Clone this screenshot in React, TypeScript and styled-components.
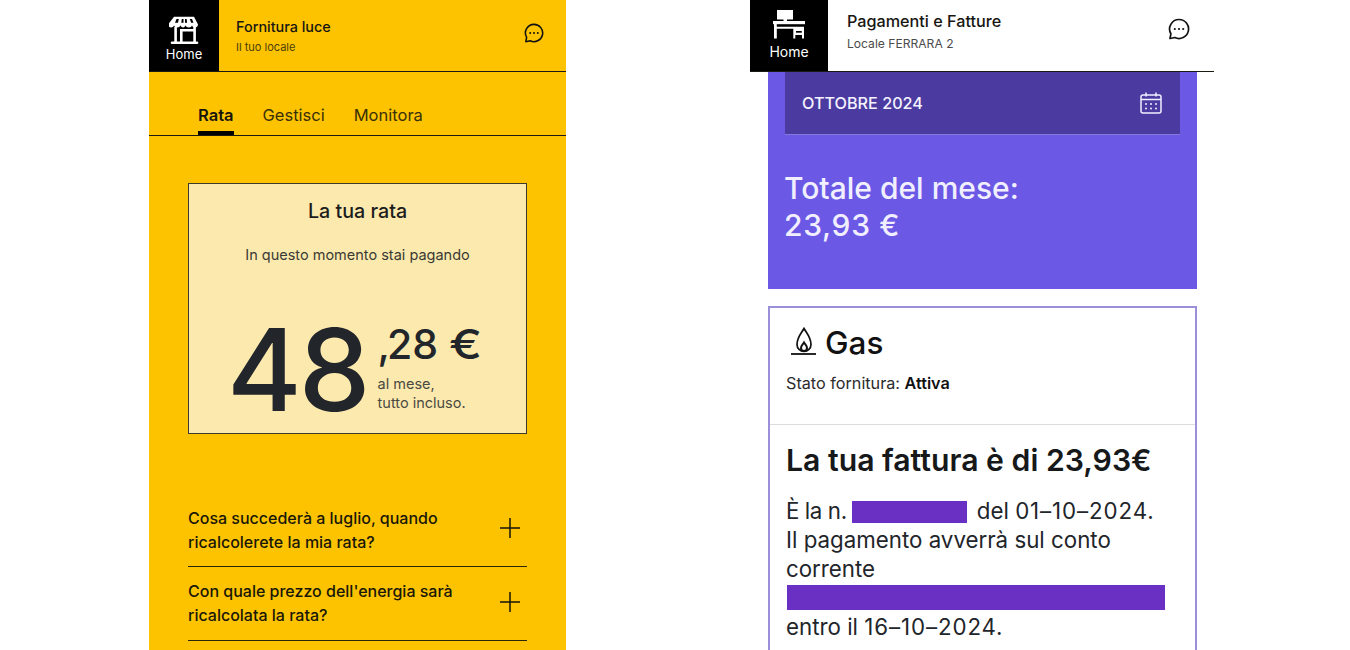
import React from "react";
import styled, { createGlobalStyle } from "styled-components";

const Global = createGlobalStyle`
  html, body { margin: 0; padding: 0; background: #fff; }
  body { font-family: "Inter", "Liberation Sans", sans-serif; color: #1f2226; overflow: hidden; }
  * { box-sizing: border-box; }
`;

const Page = styled.div`
  width: 1350px;
  height: 650px;
  overflow: hidden;
  display: flex;
  align-items: flex-start;
  padding-left: 149px;
  gap: 184px;
  background: #fff;
`;

const LeftPhone = styled.section`
  width: 417px;
  height: 650px;
  background: #fdc300;
  flex: none;
`;

const RightPhone = styled.section`
  width: 464px;
  height: 650px;
  flex: none;
`;

const Header = styled.header`
  height: 72px;
  display: flex;
  align-items: stretch;
  border-bottom: 1px solid #1c1a10;
`;

const HomeTile = styled.div<{ $w: number; $size: number; $pb: number; $gap: number }>`
  width: ${(p) => p.$w}px;
  flex: none;
  background: #000;
  color: #fff;
  font-size: ${(p) => p.$size}px;
  line-height: 16px;
  display: flex;
  flex-direction: column;
  align-items: center;
  justify-content: flex-end;
  padding-bottom: ${(p) => p.$pb}px;
  gap: ${(p) => p.$gap}px;
`;

const HeadText = styled.div<{ $pl: number; $gap: number; $top: number }>`
  flex: 1;
  padding: ${(p) => p.$top}px 0 0 ${(p) => p.$pl}px;
  display: flex;
  flex-direction: column;
  gap: ${(p) => p.$gap}px;
`;

const HeadTitle = styled.div<{ $size: number }>`
  font-size: ${(p) => p.$size}px;
  line-height: 20px;
  font-weight: 500;
  color: #181612;
`;

const HeadSub = styled.div<{ $size: number; $color: string }>`
  font-size: ${(p) => p.$size}px;
  line-height: 16px;
  color: ${(p) => p.$color};
`;

const ChatSlot = styled.div<{ $right: number; $top: number }>`
  flex: none;
  padding: ${(p) => p.$top}px ${(p) => p.$right}px 0 0;
`;

const Tabs = styled.nav`
  height: 64px;
  display: flex;
  align-items: flex-end;
  gap: 29px;
  padding-left: 49px;
  border-bottom: 1px solid #1c1a10;
`;

const Tab = styled.div<{ $active?: boolean }>`
  font-size: 16.5px;
  line-height: 20px;
  height: 32px;
  padding-top: 2px;
  font-weight: ${(p) => (p.$active ? 600 : 400)};
  color: ${(p) => (p.$active ? "#16140c" : "#3a3008")};
  border-bottom: ${(p) => (p.$active ? "4px solid #000" : "0")};
`;

const RataCard = styled.div`
  margin: 47px 39px 0;
  height: 251px;
  background: #fce9ae;
  border: 1px solid #3b3a2c;
  display: flex;
  flex-direction: column;
  align-items: center;
  padding-top: 15px;
`;

const RataTitle = styled.div`
  font-size: 19.7px;
  line-height: 24px;
  font-weight: 500;
  color: #1b1c1c;
`;

const RataLead = styled.div`
  font-size: 14.5px;
  line-height: 20px;
  margin-top: 22px;
  color: #3a3a34;
`;

const Amount = styled.div`
  display: flex;
  align-self: flex-start;
  margin: 48px 0 0 38px;
`;

const BigNumber = styled.div`
  font-size: 114px;
  line-height: 114px;
  font-weight: 500;
  letter-spacing: -3px;
  color: #22262b;
`;

const AmountSide = styled.div`
  display: flex;
  flex-direction: column;
  margin-left: 10px;
`;

const Cents = styled.div`
  font-size: 41px;
  line-height: 48px;
  margin-top: 7px;
  font-weight: 500;
  white-space: nowrap;
  color: #22262b;
`;

const Comma = styled.span`
  letter-spacing: -3px;
`;

const Euro = styled.span`
  display: inline-block;
  transform: scaleX(1.2);
  transform-origin: left center;
`;

const Period = styled.div`
  font-size: 14.5px;
  line-height: 19px;
  margin-top: 6px;
  color: #4b4a42;
`;

const Faq = styled.div`
  margin: 61px 39px 0;
  display: flex;
  flex-direction: column;
`;

const FaqRow = styled.div<{ $h: number; $pt: number }>`
  height: ${(p) => p.$h}px;
  padding-top: ${(p) => p.$pt}px;
  display: flex;
  justify-content: space-between;
  border-bottom: 1px solid #2c2608;
`;

const FaqText = styled.div`
  font-size: 16px;
  line-height: 23.5px;
  font-weight: 500;
  color: #191708;
`;

const PlusSlot = styled.div<{ $pt: number }>`
  padding: ${(p) => p.$pt}px 7px 0 0;
`;

const PurplePanel = styled.div`
  margin: 0 17px 0 18px;
  width: 429px;
  height: 217px;
  background: #6b59e6;
  padding: 0 17px;
`;

const MonthBar = styled.div`
  height: 63px;
  background: #4b3ba0;
  border-bottom: 1px solid #8478dc;
  display: flex;
  align-items: center;
  justify-content: space-between;
  padding: 0 18px 0 17px;
  color: #f4f2ff;
  font-size: 16.2px;
  font-weight: 500;
`;

const MonthTotal = styled.div`
  margin: 35px 0 0 -1px;
  font-size: 30px;
  line-height: 37px;
  font-weight: 500;
  color: #f1efff;
`;

const TotalValue = styled.span`
  letter-spacing: 0.7px;
`;

const GasCard = styled.div`
  margin: 17px 17px 0 18px;
  width: 429px;
  height: 360px;
  border: 2px solid #9a90da;
  border-bottom: 0;
  background: #fff;
`;

const GasTop = styled.div`
  height: 117px;
  padding: 15px 0 0 16px;
  border-bottom: 1px solid #dddddd;
`;

const GasTitle = styled.div`
  display: flex;
  align-items: center;
  gap: 9px;
  padding-left: 2px;
  font-size: 31.5px;
  line-height: 40px;
  font-weight: 500;
  color: #111;
`;

const Stato = styled.div`
  margin-top: 10px;
  font-size: 16.2px;
  line-height: 20px;
  color: #2b2b2b;
  b { font-weight: 600; color: #111; }
`;

const GasBody = styled.div`
  padding: 15px 16px 0;
`;

const Invoice = styled.div`
  font-size: 30.2px;
  line-height: 40px;
  font-weight: 600;
  white-space: nowrap;
  color: #16181a;
`;

const Para = styled.div`
  margin-top: 16px;
  font-size: 22.3px;
  line-height: 29px;
  color: #22252a;
  white-space: nowrap;
`;

const DateText = styled.span`
  letter-spacing: 0.9px;
`;

const InvoiceLead = styled.span`
  letter-spacing: -0.4px;
`;

const Redact = styled.span`
  display: inline-block;
  width: 115px;
  height: 22px;
  margin: 0 4px 0 -1px;
  background: #6a30c4;
  vertical-align: -4px;
`;

const RedactBar = styled.div`
  width: 378px;
  height: 25px;
  margin: 2px 0 2px 1px;
  background: #6a30c4;
`;

const Store = () => (
  <svg width="30" height="28" viewBox="0 0 30 28" fill="none">
    <path fill="#fff" d="M5 .7h20l4 7.800c0 2-1.500 3-3 3s-2.600-.9-3-2c-.4 1.100-1.600 2-3.200 2s-2.600-.9-3.300-2c-.5 1.100-1.500 2-2.500 2s-2-.9-2.500-2c-.7 1.100-1.700 2-3.300 2s-2.800-.9-3.200-2c-.4 1.100-1.500 2-3 2s-3-1-3-3z" />
    <path fill="#000" d="M7.500 3h2.300l-.8 3.700H6zM12.800 3h1.700v3.700h-2.200zM16 3h1.600l.5 3.700H16zM20.700 3H23l1.500 3.700h-2.300z" />
    <path stroke="#fff" strokeWidth="2.600" d="M6.600 11v15M25.600 11v15M12.300 26V14.300h13" />
    <path stroke="#fff" strokeWidth="2.600" strokeLinecap="round" d="M3 26.700h25" />
  </svg>
);

const Desk = () => (
  <svg width="32" height="30" viewBox="0 0 32 30" fill="none">
    <path fill="#fff" d="M4 1h16v9.500H4z" />
    <path fill="#fff" d="M10.500 10h3.500v2.500h-3.500z" />
    <path fill="#fff" d="M0 12h32v3.200H0z" />
    <path fill="#fff" d="M1 15h2.800v14.500H1zM3.800 17.700h16.500v2H3.800zM20.300 17.700H31v11.800h-2v-3.500h-6.700v3.500h-2z" />
    <path fill="#000" d="M23 22h5.800v1.700H23z" />
  </svg>
);

const Chat = ({ size }: { size: number }) => (
  <svg width={size} height={size} viewBox="0 0 22 22" fill="none">
    <path stroke="#111" strokeWidth="1.700" strokeLinejoin="round" d="M11 1.500a9.500 9.500 0 1 1-4.200 18L2 20.500l.9-4.700A9.500 9.500 0 0 1 11 1.500z" />
    <circle cx="6.800" cy="11" r="1.100" fill="#111" />
    <circle cx="11" cy="11" r="1.100" fill="#111" />
    <circle cx="15.200" cy="11" r="1.100" fill="#111" />
  </svg>
);

const Plus = () => (
  <svg width="20" height="20" viewBox="0 0 20 20" stroke="#16140a" strokeWidth="1.500">
    <path d="M10 0v20M0 10h20" />
  </svg>
);

const Calendar = () => (
  <svg width="22" height="22" viewBox="0 0 22 22" fill="none" stroke="#f1efff" strokeWidth="1.500">
    <rect x="1" y="3" width="20" height="18" rx="2" />
    <path d="M1 7.500h20M6 .5v4M16 .5v4" />
    <g fill="#f1efff" stroke="none">
      <circle cx="6" cy="12" r="1" /><circle cx="11" cy="12" r="1" /><circle cx="16" cy="12" r="1" />
      <circle cx="6" cy="16.500" r="1" /><circle cx="11" cy="16.500" r="1" /><circle cx="16" cy="16.500" r="1" />
    </g>
  </svg>
);

const Flame = () => (
  <svg width="28" height="32" viewBox="0 0 28 32" fill="none" stroke="#111" strokeWidth="1.700">
    <path d="M16 1.500C13.500 6 9 10.500 9 17.500a7 7 0 0 0 14 0C23 10.500 18.500 6 16 1.500z" />
    <path strokeWidth="2" d="M16 15.500c-1 1.800-3 3.200-3 5.500a3 3 0 0 0 6 0c0-2.300-2-3.700-3-5.500z" />
    <path d="M3 27h25" strokeWidth="1.800" />
  </svg>
);

export default function App() {
  return (
    <>
      <Global />
      <Page>
        <LeftPhone>
          <Header>
            <HomeTile $w={70} $size={13} $pb={9} $gap={2}>
              <Store />
              Home
            </HomeTile>
            <HeadText $pl={17} $gap={2} $top={17}>
              <HeadTitle $size={14.4}>Fornitura luce</HeadTitle>
              <HeadSub $size={11} $color="#4a3d0a">Il tuo locale</HeadSub>
            </HeadText>
            <ChatSlot $right={22} $top={23}>
              <Chat size={20} />
            </ChatSlot>
          </Header>
          <Tabs>
            <Tab $active>Rata</Tab>
            <Tab>Gestisci</Tab>
            <Tab>Monitora</Tab>
          </Tabs>
          <RataCard>
            <RataTitle>La tua rata</RataTitle>
            <RataLead>In questo momento stai pagando</RataLead>
            <Amount>
              <BigNumber>48</BigNumber>
              <AmountSide>
                <Cents>
                  <Comma>,</Comma>28 <Euro>€</Euro>
                </Cents>
                <Period>
                  al mese,
                  <br />
                  tutto incluso.
                </Period>
              </AmountSide>
            </Amount>
          </RataCard>
          <Faq>
            <FaqRow $h={72} $pt={12}>
              <FaqText>
                Cosa succederà a luglio, quando
                <br />
                ricalcolerete la mia rata?
              </FaqText>
              <PlusSlot $pt={11}><Plus /></PlusSlot>
            </FaqRow>
            <FaqRow $h={74} $pt={13}>
              <FaqText>
                Con quale prezzo dell'energia sarà
                <br />
                ricalcolata la rata?
              </FaqText>
              <PlusSlot $pt={12}><Plus /></PlusSlot>
            </FaqRow>
          </Faq>
        </LeftPhone>
        <RightPhone>
          <Header>
            <HomeTile $w={78} $size={14} $pb={11} $gap={5}>
              <Desk />
              Home
            </HomeTile>
            <HeadText $pl={19} $gap={5} $top={11}>
              <HeadTitle $size={16.2}>Pagamenti e Fatture</HeadTitle>
              <HeadSub $size={12.1} $color="#4b4b4b">Locale FERRARA 2</HeadSub>
            </HeadText>
            <ChatSlot $right={24} $top={18}>
              <Chat size={22} />
            </ChatSlot>
          </Header>
          <PurplePanel>
            <MonthBar>
              OTTOBRE 2024
              <Calendar />
            </MonthBar>
            <MonthTotal>
              Totale del mese:
              <br />
              <TotalValue>23,93 €</TotalValue>
            </MonthTotal>
          </PurplePanel>
          <GasCard>
            <GasTop>
              <GasTitle>
                <Flame />
                Gas
              </GasTitle>
              <Stato>
                Stato fornitura: <b>Attiva</b>
              </Stato>
            </GasTop>
            <GasBody>
              <Invoice>La tua fattura è di 23,93€</Invoice>
              <Para>
                <InvoiceLead>È la n. </InvoiceLead><Redact /> del <DateText>01–10–2024.</DateText>
                <br />
                Il pagamento avverrà sul conto
                <br />
                corrente
                <RedactBar />
                entro il <DateText>16–10–2024.</DateText>
              </Para>
            </GasBody>
          </GasCard>
        </RightPhone>
      </Page>
    </>
  );
}
